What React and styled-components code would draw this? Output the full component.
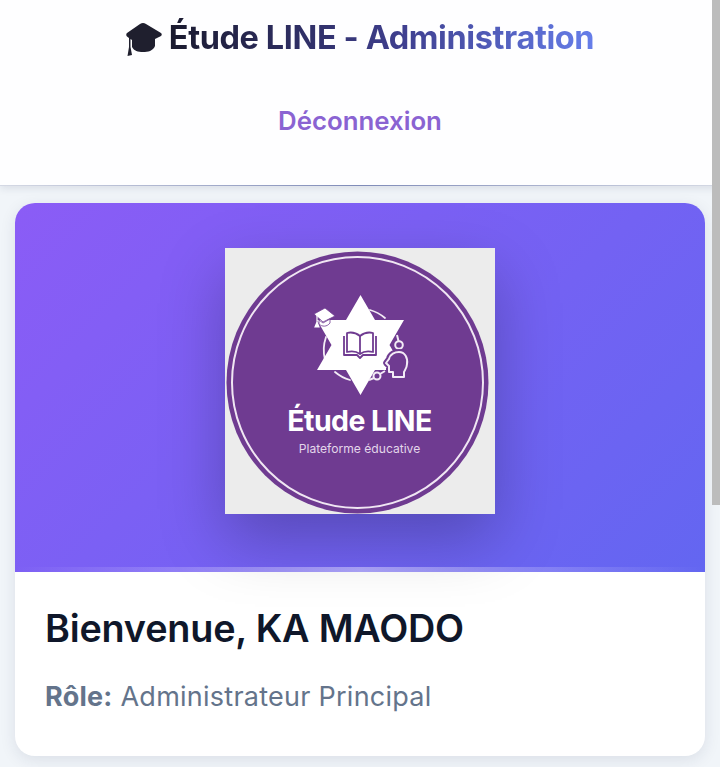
import React from 'react';
import styled, { createGlobalStyle } from 'styled-components';

const GlobalStyle = createGlobalStyle`
  html, body {
    margin: 0;
    padding: 0;
    height: 767px;
    overflow: hidden;
    background: #f1f5f9;
    font-family: "Inter", "Liberation Sans", sans-serif;
  }
  * {
    box-sizing: border-box;
  }
`;

const HEAD_PATH = 'M168 129 L168 124 L164 124 L164 118 L161 115 L164 111 C165 106 170 104 174 104 C180 104 183 110 182 116 C182 120 180 122 179 124 L179 129 Z';

const CapIcon = () => (
  <StyledCap viewBox="0 0 36 33">
    <path d="M17 0 C18 0 19 .5 20 1 L35 10 C36 11 36 12 35 13 L29 16 L29 23 C27 28 22 29 17 29 C12 29 8 28 6 24 L6 17 L4.500 16 L4.500 24 L6 32 L1.500 33 L3 24 L3 15 L1 13.500 C0 12.500 0 11 1 10 L14 1 C15 .5 16 0 17 0 Z" />
  </StyledCap>
);

const Logo = () => (
  <StyledLogo>
    <svg viewBox="0 0 270 266" width="270" height="266">
      <circle cx="132.500" cy="134.500" r="131" fill="#6f3b91" />
      <circle cx="132.500" cy="134.500" r="125.500" fill="none" stroke="#f0e6f3" strokeWidth="2" />

      <g fill="none" stroke="#f3ecf6" strokeWidth="1.800" strokeLinecap="round">
        <path d="M101 89 A40 40 0 0 0 100 112" />
        <path d="M145 62 A40 40 0 0 1 160 70" />
        <path d="M110 124 A40 40 0 0 0 125 132" />
      </g>

      <path
        d="M135.500 47 L150 72 L179 72 L164.500 97 L179 122 L150 122 L135.500 147 L121 122 L92 122 L106.500 97 L92 72 L121 72 Z"
        fill="#fff"
      />

      <g fill="none" stroke="#6f3b91" strokeWidth="1.800" strokeLinejoin="round">
        <path d="M135 88 C130 84 126 84 122 85 L122 104 C126 103 131 103 135 106 C139 103 144 103 148 104 L148 85 C144 84 140 84 135 88 Z" />
        <path d="M135 88 L135 106" />
        <path d="M119 88 L119 107 L132 107 L135 110 L138 107 L151 107 L151 88" />
      </g>

      <g fill="#fff" stroke="#6f3b91" strokeWidth=".800">
        <path d="M89 66 L100 60 L110 68 L98 74 Z" />
        <path d="M94 72 L98 75 L105 71 L105 75 C102 79 97 79 94 76 Z" />
      </g>
      <path d="M92 67 L92 75 M90 79 L94 79 L92 74 Z" fill="#fff" stroke="#fff" strokeWidth="1.200" />

      <path d="M172 87 L173.500 93 M174.500 101 L175 105" stroke="#f3ecf6" strokeWidth="2" />
      <circle cx="174" cy="97" r="3.800" fill="none" stroke="#f3ecf6" strokeWidth="2" />

      <path d={HEAD_PATH} fill="#6f3b91" stroke="#6f3b91" strokeWidth="6" strokeLinejoin="round" />
      <path d={HEAD_PATH} fill="#6f3b91" stroke="#f3ecf6" strokeWidth="2" strokeLinejoin="round" />

      <circle cx="152" cy="128" r="3.500" fill="none" stroke="#f3ecf6" strokeWidth="2" />
      <path d="M144 132 L149 130 M155 126 L160 123" stroke="#f3ecf6" strokeWidth="2" fill="none" />

      <LogoTitle x="134.500" y="183" textAnchor="middle">Étude LINE</LogoTitle>
      <LogoTagline x="134.500" y="205" textAnchor="middle">Plateforme éducative</LogoTagline>
    </svg>
  </StyledLogo>
);

const App = () => (
  <>
    <GlobalStyle />
    <StyledHeader>
      <StyledTitleRow>
        <CapIcon />
        <StyledTitle>Étude LINE - Administration</StyledTitle>
      </StyledTitleRow>
      <StyledLogout>Déconnexion</StyledLogout>
    </StyledHeader>

    <StyledMain>
      <StyledCard>
        <StyledBanner>
          <Logo />
        </StyledBanner>
        <StyledCardBody>
          <StyledWelcome>Bienvenue, KA MAODO</StyledWelcome>
          <StyledRole>
            <strong>Rôle:</strong> Administrateur Principal
          </StyledRole>
        </StyledCardBody>
      </StyledCard>
    </StyledMain>

    <StyledScrollbar />
  </>
);

const StyledHeader = styled.header`
  position: relative;
  height: 186px;
  padding-top: 18px;
  background: #fefeff;
  box-shadow: 0 2px 8px rgba(30, 41, 80, .12);
  display: flex;
  flex-direction: column;
  align-items: center;

  &::after {
    content: "";
    position: absolute;
    left: 0;
    right: 0;
    bottom: 0;
    height: 1px;
    background: linear-gradient(90deg, #d5d9e4, #7f8bb8 50%, #d5d9e4);
  }
`;

const StyledTitleRow = styled.div`
  display: flex;
  align-items: center;
  gap: 7px;
  height: 40px;
`;

const StyledCap = styled.svg`
  width: 36px;
  height: 33px;
  fill: #1f1f2e;
  margin-top: 3px;
`;

const StyledTitle = styled.h1`
  margin: 0;
  font-size: 32.500px;
  line-height: 40px;
  font-weight: 700;
  letter-spacing: -.4px;
  white-space: nowrap;
  background: linear-gradient(90deg, #1a1a2e 0%, #3f3f8f 55%, #667eea 100%);
  -webkit-background-clip: text;
  background-clip: text;
  color: transparent;
`;

const StyledLogout = styled.a`
  margin-top: 46px;
  font-size: 25.800px;
  line-height: 34px;
  font-weight: 600;
  color: #8a63d2;
`;

const StyledMain = styled.main`
  padding: 17px 15px 11px;
`;

const StyledCard = styled.section`
  height: 553px;
  border-radius: 20px;
  background: #ffffff;
  overflow: hidden;
  box-shadow: 0 4px 16px rgba(30, 41, 80, .1);
`;

const StyledBanner = styled.div`
  position: relative;
  height: 369px;
  padding-top: 45px;
  background: linear-gradient(135deg, #8b5cf6 0%, #6366f1 100%);
  display: flex;
  justify-content: center;
  align-items: flex-start;

  &::after {
    content: "";
    position: absolute;
    left: 0;
    right: 0;
    bottom: 0;
    height: 5px;
    background: linear-gradient(90deg, transparent, rgba(255, 255, 255, .4) 50%, transparent);
  }
`;

const StyledLogo = styled.div`
  width: 270px;
  height: 266px;
  background: #ececec;
  box-shadow: 0 25px 60px rgba(0, 0, 0, .25);

  svg {
    display: block;
  }
`;

const LogoTitle = styled.text`
  font-family: "Inter", sans-serif;
  font-size: 28.500px;
  font-weight: 700;
  letter-spacing: -.6px;
  fill: #ffffff;
`;

const LogoTagline = styled.text`
  font-family: "Inter", sans-serif;
  font-size: 12.100px;
  fill: #e3d6ea;
`;

const StyledCardBody = styled.div`
  padding: 32px 30px;
`;

const StyledWelcome = styled.h2`
  margin: 0;
  font-size: 37.800px;
  line-height: 48px;
  font-weight: 600;
  letter-spacing: -.2px;
  color: #0f172a;
  white-space: nowrap;
`;

const StyledRole = styled.p`
  margin: 28px 0 0;
  font-size: 27px;
  line-height: 34px;
  letter-spacing: .25px;
  color: #64748b;

  strong {
    font-weight: 700;
  }
`;

const StyledScrollbar = styled.div`
  position: fixed;
  top: 0;
  right: 0;
  width: 8px;
  height: 505px;
  background: #bcbcbc;
`;

export default App;
